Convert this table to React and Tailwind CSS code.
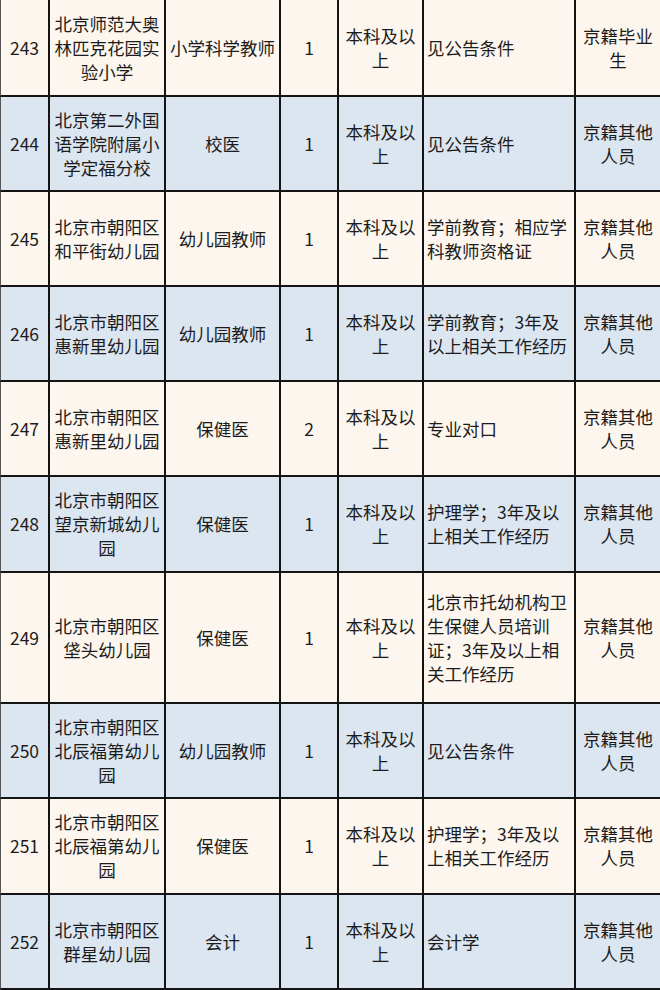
import React from "react";

const rows = [
  { n: "243", unit: "北京师范大奥林匹克花园实验小学", pos: "小学科学教师", cnt: "1", edu: "本科及以上", cond: "见公告条件", cat: "京籍毕业生", h: "h-[97px]", bg: "bg-[#fdf6ee]" },
  { n: "244", unit: "北京第二外国语学院附属小学定福分校", pos: "校医", cnt: "1", edu: "本科及以上", cond: "见公告条件", cat: "京籍其他人员", h: "h-[95px]", bg: "bg-[#dce6f1]" },
  { n: "245", unit: "北京市朝阳区和平街幼儿园", pos: "幼儿园教师", cnt: "1", edu: "本科及以上", cond: "学前教育；相应学科教师资格证", cat: "京籍其他人员", h: "h-[95px]", bg: "bg-[#fdf6ee]" },
  { n: "246", unit: "北京市朝阳区惠新里幼儿园", pos: "幼儿园教师", cnt: "1", edu: "本科及以上", cond: "学前教育；3年及以上相关工作经历", cat: "京籍其他人员", h: "h-[95px]", bg: "bg-[#dce6f1]" },
  { n: "247", unit: "北京市朝阳区惠新里幼儿园", pos: "保健医", cnt: "2", edu: "本科及以上", cond: "专业对口", cat: "京籍其他人员", h: "h-[95px]", bg: "bg-[#fdf6ee]" },
  { n: "248", unit: "北京市朝阳区望京新城幼儿园", pos: "保健医", cnt: "1", edu: "本科及以上", cond: "护理学；3年及以上相关工作经历", cat: "京籍其他人员", h: "h-[96px]", bg: "bg-[#dce6f1]" },
  { n: "249", unit: "北京市朝阳区垡头幼儿园", pos: "保健医", cnt: "1", edu: "本科及以上", cond: "北京市托幼机构卫生保健人员培训证；3年及以上相关工作经历", cat: "京籍其他人员", h: "h-[131px]", bg: "bg-[#fdf6ee]" },
  { n: "250", unit: "北京市朝阳区北辰福第幼儿园", pos: "幼儿园教师", cnt: "1", edu: "本科及以上", cond: "见公告条件", cat: "京籍其他人员", h: "h-[95px]", bg: "bg-[#dce6f1]" },
  { n: "251", unit: "北京市朝阳区北辰福第幼儿园", pos: "保健医", cnt: "1", edu: "本科及以上", cond: "护理学；3年及以上相关工作经历", cat: "京籍其他人员", h: "h-[96px]", bg: "bg-[#fdf6ee]" },
  { n: "252", unit: "北京市朝阳区群星幼儿园", pos: "会计", cnt: "1", edu: "本科及以上", cond: "会计学", cat: "京籍其他人员", h: "h-[95px]", bg: "bg-[#dce6f1]" },
];

function Cell({ children, className = "" }) {
  return (
    <div className={`flex items-center border-r-2 border-b-2 border-[#141414] ${className}`}>
      {children}
    </div>
  );
}

export default function App() {
  return (
    <div
      className="w-[660px] h-[990px] overflow-hidden bg-white text-[#1c1c1c] text-[17.5px] leading-[24px]"
      style={{ fontFamily: '"Noto Sans CJK SC", "Noto Sans", sans-serif' }}
    >
      {rows.map((r) => (
        <div
          key={r.n}
          className={`grid grid-cols-[50px_116px_115px_58px_85px_152px_84px] ${r.h} ${r.bg}`}
        >
          <Cell className="justify-center border-l border-l-[#555]">{r.n}</Cell>
          <Cell className="justify-center px-[4px] text-center">
            <span>{r.unit}</span>
          </Cell>
          <Cell className="justify-center text-center">{r.pos}</Cell>
          <Cell className="justify-center">{r.cnt}</Cell>
          <Cell className="justify-center px-[4px] text-center">
            <span>{r.edu}</span>
          </Cell>
          <Cell className="justify-start pl-[3px] pr-[2px] text-left">
            <span>{r.cond}</span>
          </Cell>
          <div className="flex items-center justify-center border-b-2 border-[#141414] px-[5px] text-center">
            <span>{r.cat}</span>
          </div>
        </div>
      ))}
    </div>
  );
}
